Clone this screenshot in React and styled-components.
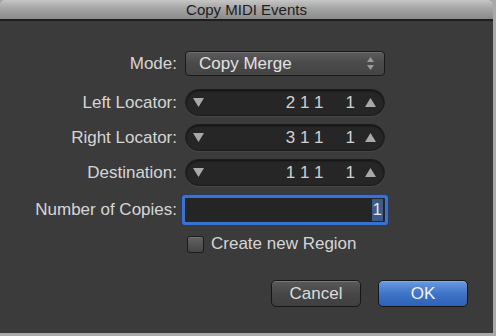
import React from "react";
import styled, { createGlobalStyle } from "styled-components";

const Global = createGlobalStyle`
  html, body { margin: 0; padding: 0; background: #a9a9a9; }
  body { font-family: "Liberation Sans", Arial, sans-serif; }
`;

const Window = styled.div`
  width: 493px;
  height: 333px;
  background: #3b3b3b;
  display: flex;
  flex-direction: column;
  overflow: hidden;
  border-radius: 4px 4px 0 0;
`;

const TitleBar = styled.div`
  height: 19px;
  background: linear-gradient(#c6c6c6, #a4a4a4 45%, #8a8a8a);
  border-bottom: 2px solid #1e1e1e;
  display: flex;
  align-items: center;
  justify-content: center;
  font-size: 15px;
  color: #1c1c1c;
  flex-shrink: 0;
`;

const Form = styled.div`
  display: flex;
  flex-direction: column;
  padding-top: 30px;
`;

const Row = styled.div`
  display: grid;
  grid-template-columns: 177px 200px;
  column-gap: 8px;
  align-items: center;
  margin-top: ${(p) => p.$mt || 0}px;
`;

const Label = styled.div`
  text-align: right;
  font-size: 17px;
  color: #d6d6d6;
  white-space: nowrap;
`;

const Popup = styled.div`
  height: 23px;
  box-sizing: content-box;
  border: 1px solid #191919;
  border-radius: 4px;
  background: linear-gradient(#5c5c5c, #4a4a4a 50%, #444);
  box-shadow: inset 0 1px 0 rgba(255,255,255,0.12);
  display: flex;
  align-items: center;
  justify-content: space-between;
  padding: 0 10px 0 13px;
  font-size: 17px;
  color: #e2e2e2;
`;

const Stepper = styled.div`
  height: 27px;
  box-sizing: border-box;
  border-radius: 14px;
  background: #262626;
  border: 1px solid #1c1c1c;
  box-shadow: inset 0 1px 2px rgba(0,0,0,0.6), 0 1px 0 rgba(255,255,255,0.06);
  display: flex;
  align-items: center;
  padding: 0 8px 0 7px;
  font-size: 17px;
  color: #d2d2d2;
`;

const Digits = styled.span`
  margin-left: auto;
`;

const Unit = styled.span`
  margin-left: 22px;
  margin-right: 10px;
`;

const Field = styled.div`
  height: 24px;
  box-sizing: border-box;
  background: #252525;
  box-shadow: 0 0 0 3px #3a72d4, 0 0 0 4px rgba(30,60,120,0.6);
  border-radius: 1px;
  display: flex;
  align-items: center;
  justify-content: flex-end;
  padding-right: 2px;
  font-size: 17px;
  color: #e6e6e6;
`;

const Selected = styled.span`
  background: #3d5a88;
  padding: 0 1px;
  line-height: 22px;
`;

const CheckRow = styled.label`
  grid-column: 2;
  display: flex;
  align-items: center;
  gap: 7px;
  font-size: 17px;
  color: #d6d6d6;
  margin-left: 2px;
`;

const Box = styled.span`
  width: 15px;
  height: 15px;
  border: 1px solid #1a1a1a;
  border-radius: 3px;
  background: linear-gradient(#626262, #454545);
  box-shadow: inset 0 1px 0 rgba(255,255,255,0.12);
`;

const Buttons = styled.div`
  display: flex;
  justify-content: flex-end;
  gap: 17px;
  margin-top: 26px;
  padding-right: 25px;
`;

const Button = styled.button`
  width: 90px;
  height: 27px;
  border-radius: 5px;
  border: 1px solid #161616;
  font-family: inherit;
  font-size: 17px;
  padding: 0;
  color: ${(p) => (p.$primary ? "#f2f2f2" : "#dcdcdc")};
  background: ${(p) =>
    p.$primary
      ? "linear-gradient(#6b9be0, #3f74c8 50%, #2e62b6)"
      : "linear-gradient(#5a5a5a, #474747 50%, #3f3f3f)"};
  box-shadow: inset 0 1px 0 rgba(255,255,255,0.18);
`;

const Tri = ({ up }) => (
  <svg width="11" height="9" viewBox="0 0 11 9">
    <path d={up ? "M5.5 0 L11 9 L0 9 Z" : "M0 0 L11 0 L5.5 9 Z"} fill="#a9a9a9" />
  </svg>
);

const PopArrows = () => (
  <svg width="7" height="13" viewBox="0 0 7 13">
    <path d="M3.5 0 L7 5 L0 5 Z M0 8 L7 8 L3.5 13 Z" fill="#9a9a9a" />
  </svg>
);

const Locator = ({ value }) => (
  <Stepper>
    <Tri />
    <Digits>{value}</Digits>
    <Unit>1</Unit>
    <Tri up />
  </Stepper>
);

export default function App() {
  return (
    <>
      <Global />
      <Window>
        <TitleBar>Copy MIDI Events</TitleBar>
        <Form>
          <Row>
            <Label>Mode:</Label>
            <Popup>
              <span>Copy Merge</span>
              <PopArrows />
            </Popup>
          </Row>
          <Row $mt={13}>
            <Label>Left Locator:</Label>
            <Locator value="2 1 1" />
          </Row>
          <Row $mt={8}>
            <Label>Right Locator:</Label>
            <Locator value="3 1 1" />
          </Row>
          <Row $mt={8}>
            <Label>Destination:</Label>
            <Locator value="1 1 1" />
          </Row>
          <Row $mt={12}>
            <Label>Number of Copies:</Label>
            <Field>
              <Selected>1</Selected>
            </Field>
          </Row>
          <Row $mt={12}>
            <CheckRow>
              <Box />
              Create new Region
            </CheckRow>
          </Row>
          <Buttons>
            <Button>Cancel</Button>
            <Button $primary>OK</Button>
          </Buttons>
        </Form>
      </Window>
    </>
  );
}
